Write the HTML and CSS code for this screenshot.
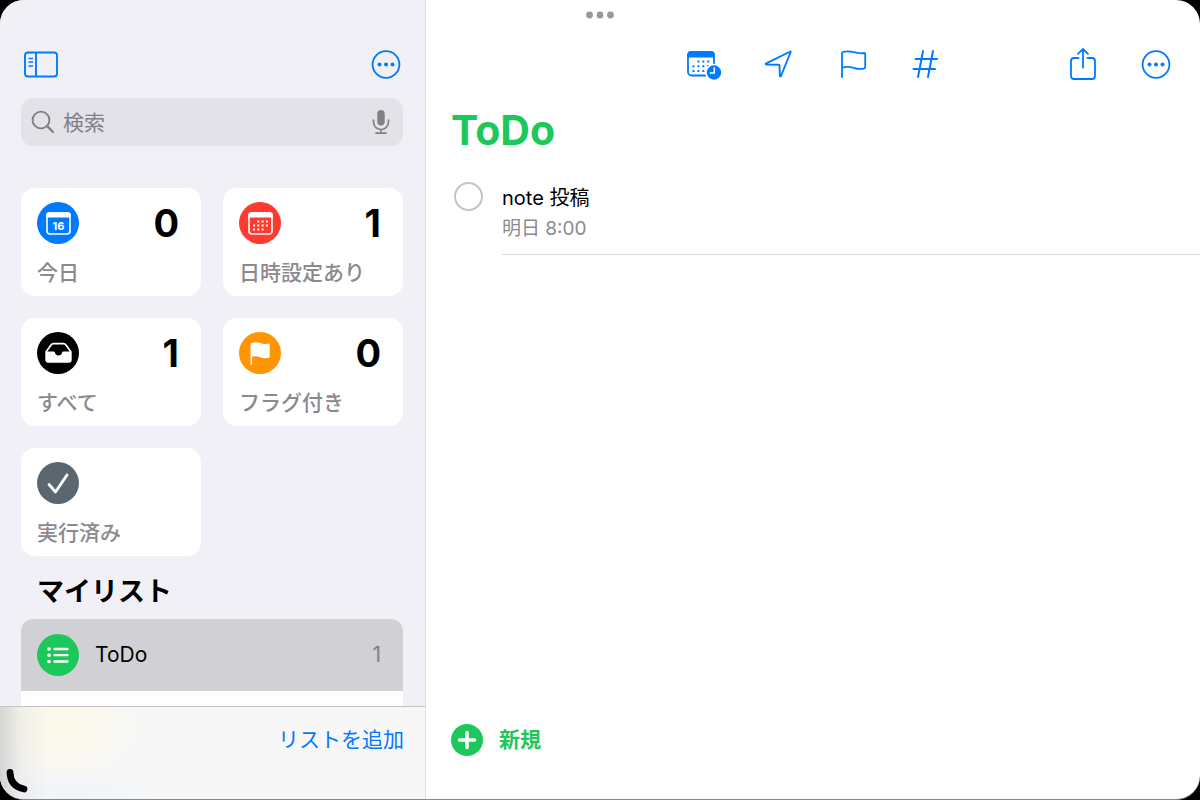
FILE: index.html
```html
<!DOCTYPE html>
<html lang="ja">
<head>
    <meta charset="UTF-8">
    <meta name="viewport" content="width=device-width, initial-scale=1.0">
    <title>ToDo - リマインダー</title>
    <link rel="stylesheet" href="styles.css">
</head>
<body>

    <div class="app">
        <!-- サイドバー -->
        <aside class="sidebar">
            <div class="sidebar-content">
                <div class="sidebar-header">
                    <button class="icon-button" type="button" aria-label="サイドバー">
                        <svg width="48" height="48" viewBox="0 0 48 48" fill="none" stroke="currentColor" stroke-width="1.900">
                            <rect x="8" y="12.500" width="32" height="24" rx="3"/>
                            <path d="M19 12.500v24"/>
                            <path d="M11.500 18.500h4.500M11.500 22h4.500M11.500 26h4.500" stroke-width="1.500"/>
                        </svg>
                    </button>
                    <button class="icon-button" type="button" aria-label="その他">
                        <svg width="48" height="48" viewBox="0 0 48 48" fill="none" stroke="currentColor" stroke-width="1.800">
                            <circle cx="24" cy="24.500" r="13.400"/>
                            <g fill="currentColor" stroke="none">
                                <circle cx="17.500" cy="24.500" r="2"/>
                                <circle cx="24" cy="24.500" r="2"/>
                                <circle cx="30.500" cy="24.500" r="2"/>
                            </g>
                        </svg>
                    </button>
                </div>

                <div class="search">
                    <svg width="24" height="24" viewBox="0 0 24 24" fill="none" stroke="currentColor" stroke-linecap="round">
                        <circle cx="10" cy="10" r="8.400" stroke-width="1.900"/>
                        <path d="M16.200 16.200L22 22" stroke-width="2.400"/>
                    </svg>
                    <input type="search" placeholder="検索" aria-label="検索">
                    <button class="mic" type="button" aria-label="音声入力">
                        <svg width="18" height="26" viewBox="0 0 18 26" fill="none" stroke="currentColor" stroke-width="1.700" stroke-linecap="round">
                            <rect x="5.300" y="1" width="7.400" height="15.500" rx="3.700" fill="currentColor" stroke="none"/>
                            <path d="M1.500 11v2a7.500 7.500 0 0 0 15 0v-2M9 20.500V24M4 24.200h10"/>
                        </svg>
                    </button>
                </div>

                <nav class="cards">
                    <a class="card" href="#today">
                        <span class="badge blue">
                            <svg width="42" height="42" viewBox="0 0 42 42">
                                <rect x="10" y="11" width="23" height="21" rx="3" fill="none" stroke="#fff" stroke-width="1.600"/>
                                <path d="M9.200 15.500V13q0-2.800 2.800-2.800h19q2.800 0 2.800 2.800v2.500z" fill="#fff"/>
                                <text class="day" x="21.500" y="27.500">16</text>
                            </svg>
                        </span>
                        <span class="count">0</span>
                        <span class="card-label">今日</span>
                    </a>
                    <a class="card" href="#scheduled">
                        <span class="badge red">
                            <svg width="42" height="42" viewBox="0 0 42 42">
                                <rect x="10" y="11" width="23" height="21" rx="3" fill="none" stroke="#fff" stroke-width="1.600"/>
                                <path d="M9.200 15.500V13q0-2.800 2.800-2.800h19q2.800 0 2.800 2.800v2.500z" fill="#fff"/>
                                <path d="M18.300 19.500h11M14 23.500h15.300M14 27.500h11" stroke="#fff" stroke-width="2" stroke-dasharray="2 2.300"/>
                            </svg>
                        </span>
                        <span class="count">1</span>
                        <span class="card-label">日時設定あり</span>
                    </a>
                    <a class="card" href="#all">
                        <span class="badge black">
                            <svg width="42" height="42" viewBox="0 0 42 42">
                                <path d="M9 20l5-7q1-1.400 2.500-1.400h10q1.500 0 2.500 1.400l5 7" fill="none" stroke="#fff" stroke-width="1.700" stroke-linejoin="round"/>
                                <path d="M8.300 19.500h8.200q1.200 0 1.500 1.300a3.600 3.600 0 0 0 7 0q.3-1.300 1.500-1.300h8.200v8.300q0 3-3 3H11.300q-3 0-3-3z" fill="#fff"/>
                            </svg>
                        </span>
                        <span class="count">1</span>
                        <span class="card-label">すべて</span>
                    </a>
                    <a class="card" href="#flagged">
                        <span class="badge orange">
                            <svg width="42" height="42" viewBox="0 0 42 42">
                                <path d="M11.500 32V12q0-.8.800-1.100c3-1 6-.9 9 .1s5 1.400 8 .5q1.400-.3 1.400 1v12q0 .9-.9 1.200c-3 .9-6 .4-8.500-.5s-5-1.200-8.200-.4V32q0 .8-.8.800t-.8-.8z" fill="#fff"/>
                            </svg>
                        </span>
                        <span class="count">0</span>
                        <span class="card-label">フラグ付き</span>
                    </a>
                    <a class="card" href="#completed">
                        <span class="badge slate">
                            <svg width="42" height="42" viewBox="0 0 42 42">
                                <path d="M12 22.500l6.500 7.500L30 13" fill="none" stroke="#fff" stroke-width="2.800" stroke-linecap="round" stroke-linejoin="round"/>
                            </svg>
                        </span>
                        <span class="card-label">実行済み</span>
                    </a>
                </nav>

                <h2>マイリスト</h2>
                <div class="lists">
                    <a class="list-row selected" href="#todo">
                        <span class="badge green">
                            <svg width="42" height="42" viewBox="0 0 42 42" fill="#fff" stroke="#fff" stroke-width="2.300" stroke-linecap="round">
                                <path d="M17.500 15h13M17.500 21.200h13M17.500 27.500h13"/>
                                <g stroke="none">
                                    <circle cx="12" cy="15" r="1.800"/>
                                    <circle cx="12" cy="21.200" r="1.800"/>
                                    <circle cx="12" cy="27.500" r="1.800"/>
                                </g>
                            </svg>
                        </span>
                        <span class="list-name">ToDo</span>
                        <span class="list-count">1</span>
                    </a>
                    <div class="list-row">
                        <span class="badge yellow"></span>
                    </div>
                </div>
            </div>

            <div class="sidebar-footer">
                <button class="add-list" type="button">リストを追加</button>
            </div>
        </aside>

        <!-- メイン -->
        <main class="main">
            <div class="toolbar">
                <div class="tools">
                    <button class="icon-button" type="button" aria-label="日時">
                        <svg width="48" height="48" viewBox="0 0 48 48">
                            <rect x="9" y="12" width="26" height="23.500" rx="3.500" fill="none" stroke="currentColor" stroke-width="1.800"/>
                            <path d="M8.100 17.500V15q0-4 4-4h19.800q4 0 4 4v2.500z" fill="currentColor"/>
                            <path d="M18.400 21.500h13M13.500 26.300h18M13.500 31h13" stroke="currentColor" stroke-width="2" stroke-dasharray="2 2.900"/>
                            <circle cx="35" cy="32.500" r="8.800" fill="#fff"/>
                            <circle cx="35" cy="32.500" r="7.200" fill="currentColor"/>
                            <path d="M35.300 28v5h-4" fill="none" stroke="#fff" stroke-width="1.500" stroke-linecap="round" stroke-linejoin="round"/>
                        </svg>
                    </button>
                    <button class="icon-button" type="button" aria-label="場所">
                        <svg width="48" height="48" viewBox="0 0 48 48" fill="none" stroke="currentColor" stroke-width="1.900" stroke-linejoin="round">
                            <path d="M37.300 11.500q.7-.3.400.5L28 36q-.7 1.300-1.100 0L26.500 25.500q0-.7-.7-.7L13.500 24.500q-1.600-.3-.2-1.100z"/>
                        </svg>
                    </button>
                    <button class="icon-button" type="button" aria-label="フラグ">
                        <svg width="48" height="48" viewBox="0 0 48 48" fill="none" stroke="currentColor" stroke-width="1.800" stroke-linecap="round" stroke-linejoin="round">
                            <path d="M15 37V13.200q0-.9.900-1.200c4-1.200 7.500-.8 11 .2s6.500 1.500 10.300.8q1-.2 1 .8v13.500q0 .9-.9 1.100c-3.800 1-7.200.6-10.700-.6s-7.500-1.300-11.600-.2"/>
                        </svg>
                    </button>
                    <button class="icon-button" type="button" aria-label="タグ">
                        <svg width="48" height="48" viewBox="0 0 48 48" fill="none" stroke="currentColor" stroke-width="2" stroke-linecap="round">
                            <path d="M22 11l-5 26M32 11l-5 26M14.500 19H36M12.500 29H34"/>
                        </svg>
                    </button>
                </div>
                <div class="tools">
                    <button class="icon-button" type="button" aria-label="共有">
                        <svg width="48" height="48" viewBox="0 0 48 48" fill="none" stroke="currentColor" stroke-width="1.800" stroke-linecap="round" stroke-linejoin="round">
                            <path d="M20.500 18H16q-3 0-3 3v15q0 3 3 3h18q3 0 3-3V21q0-3-3-3h-4.500"/>
                            <path d="M25 27.500V9.500M20 13.800L25 9l5 4.800"/>
                        </svg>
                    </button>
                    <button class="icon-button" type="button" aria-label="その他">
                        <svg width="48" height="48" viewBox="0 0 48 48" fill="none" stroke="currentColor" stroke-width="1.800">
                            <circle cx="24" cy="24.500" r="13.400"/>
                            <g fill="currentColor" stroke="none">
                                <circle cx="17.500" cy="24.500" r="2"/>
                                <circle cx="24" cy="24.500" r="2"/>
                                <circle cx="30.500" cy="24.500" r="2"/>
                            </g>
                        </svg>
                    </button>
                </div>
            </div>

            <h1>ToDo</h1>

            <div class="task">
                <input type="checkbox" id="task1">
                <div class="task-body">
                    <label for="task1">note 投稿</label>
                    <div class="task-date">明日 8:00</div>
                </div>
            </div>

            <button class="new-task" type="button">
                <svg width="32" height="32" viewBox="0 0 32 32">
                    <circle cx="16" cy="16" r="16" fill="currentColor"/>
                    <path d="M16 8.500v15M8.500 16h15" stroke="#fff" stroke-width="3.600" stroke-linecap="round"/>
                </svg>
                新規
            </button>
        </main>

        <!-- ウインドウ操作 -->
        <svg class="window-dots" width="30" height="8" viewBox="0 0 30 8" fill="#999">
            <circle cx="4.500" cy="4" r="3.400"/>
            <circle cx="15" cy="4" r="3.400"/>
            <circle cx="25.500" cy="4" r="3.400"/>
        </svg>
        <svg class="corner-mark" width="32" height="42" viewBox="0 0 32 42">
            <path d="M10 15.500q.5 14 14 16.500" fill="none" stroke="#000" stroke-width="6.800" stroke-linecap="round"/>
        </svg>
    </div>

</body>
</html>
```
FILE: styles.css
```css
* {
    box-sizing: border-box;
}
body {
    margin: 0;
    background-color: #000;
    font-family: Inter, "Noto Sans CJK JP", sans-serif;
    font-size: 21px;
    line-height: 28px;
    color: #000;
}
a {
    color: inherit;
    text-decoration: none;
}
button {
    display: flex;
    align-items: center;
    padding: 0;
    border: none;
    background: none;
    font: inherit;
    color: #007aff;
    cursor: pointer;
}
svg {
    display: block;
}
.app {
    position: relative;
    display: grid;
    grid-template-columns: 35.5% 1fr;
    height: 100vh;
    overflow: hidden;
    border-radius: 24px;
    border-bottom: 1px solid #888;
    background-color: #fff;
}

/* サイドバー */
.sidebar {
    display: flex;
    flex-direction: column;
    min-height: 0;
    border-right: 1px solid #e0e0e4;
    background-color: #f1f0f6;
}
.sidebar-content {
    flex: 1;
    min-height: 0;
    overflow: hidden;
    padding: 40px 22px 0 21px;
}
.sidebar-header {
    display: flex;
    justify-content: space-between;
    margin: 0 -7px 10px -4px;
}
.search {
    display: flex;
    align-items: center;
    height: 48px;
    padding: 0 13px 0 10px;
    gap: 8px;
    border-radius: 12px;
    background-color: #e3e2e8;
    color: #808085;
}
.search input {
    flex: 1;
    min-width: 0;
    padding: 2px 0 0;
    border: none;
    outline: none;
    background: none;
    font: inherit;
}
.search input::placeholder {
    color: #808085;
}
.mic {
    color: #808085;
}
.cards {
    display: grid;
    grid-template-columns: 1fr 1fr;
    gap: 22px;
    margin-top: 42px;
}
.card {
    display: grid;
    grid-template-columns: auto 1fr;
    align-items: center;
    row-gap: 15px;
    padding: 14px 22px 9px 16px;
    border-radius: 14px;
    background-color: #fff;
}
.badge {
    width: 42px;
    height: 42px;
    border-radius: 50%;
}
.blue {
    background-color: #007aff;
}
.red {
    background-color: #ff3b30;
}
.black {
    background-color: #000;
}
.orange {
    background-color: #ff9500;
}
.slate {
    background-color: #5b6770;
}
.green {
    background-color: #1dc85a;
}
.yellow {
    background-color: #f5c431;
}
.day {
    fill: #fff;
    font-size: 11px;
    font-weight: 700;
    text-anchor: middle;
}
.count {
    text-align: right;
    font-size: 38px;
    font-weight: 700;
}
.card-label {
    grid-column: 1 / -1;
    font-weight: 500;
    color: #8a8a8e;
}
h2 {
    margin: 19px 16px 10px;
    font-size: 27px;
    line-height: 34px;
    font-weight: 700;
}
.lists {
    overflow: hidden;
    border-radius: 12px;
    background-color: #fff;
}
.list-row {
    display: flex;
    align-items: center;
    gap: 16px;
    padding: 15px 22px 15px 16px;
}
.selected {
    background-color: #d1d0d5;
}
.list-name {
    flex: 1;
}
.list-count {
    color: #808085;
}
.sidebar-footer {
    display: flex;
    justify-content: flex-end;
    align-items: flex-start;
    height: 93px;
    padding: 19px 21px 0;
    border-top: 1px solid #c3c3c6;
    background:
        linear-gradient(to right, rgba(90, 90, 90, 0.22), rgba(90, 90, 90, 0.06) 20px, rgba(90, 90, 90, 0) 50px),
        radial-gradient(80px 65px at 62px 12px, #fcf9e6, rgba(252, 249, 230, 0)),
        radial-gradient(90px 36px at 75px 92px, #eff4fa, rgba(239, 244, 250, 0)),
        #f7f7f7;
}

/* メイン */
.main {
    display: flex;
    flex-direction: column;
    min-width: 0;
    padding: 40px 0 43px 25px;
}
.toolbar {
    display: flex;
    justify-content: flex-end;
    gap: 109px;
    padding-right: 20px;
}
.tools {
    display: flex;
    gap: 26px;
}
h1 {
    margin: 18px 0 28px;
    font-size: 41px;
    line-height: 48px;
    font-weight: 700;
    color: #1dc85a;
}
.task {
    display: flex;
    gap: 19px;
    padding-left: 3px;
}
.task input {
    appearance: none;
    flex: none;
    width: 29px;
    height: 29px;
    margin: 0;
    border: 2px solid #c4c4c6;
    border-radius: 50%;
}
.task input:checked {
    background-color: #1dc85a;
}
.task-body {
    flex: 1;
    padding: 2px 0 11px;
    border-bottom: 1px solid #d8d8da;
    font-size: 20px;
}
.task-date {
    margin-top: 3px;
    font-size: 19px;
    color: #8a8a8e;
}
.new-task {
    align-self: flex-start;
    gap: 16px;
    margin-top: auto;
    font-weight: 700;
    color: #1dc85a;
}

/* 画面の上に重なる部品 */
.window-dots {
    position: absolute;
    top: 11px;
    left: 50%;
    transform: translateX(-50%);
}
.corner-mark {
    position: absolute;
    left: 0;
    bottom: 0;
}
```
